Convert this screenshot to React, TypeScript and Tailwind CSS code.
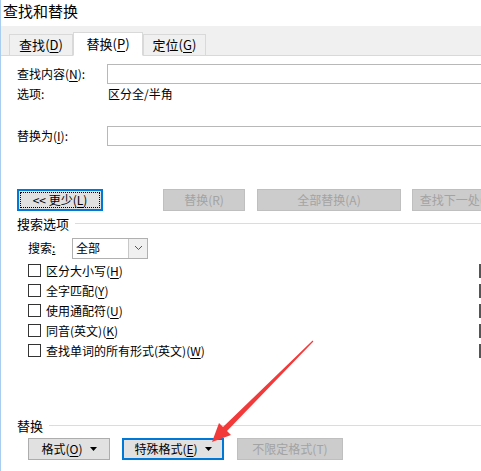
import React from 'react';

const FONT = { fontFamily: '"Noto Sans CJK SC", "Noto Sans", sans-serif' };

// mnemonic letter, underlined like Win32 dialogs
const Key: React.FC<{ k: string }> = ({ k }) => (
  <span>
    (<span className="underline underline-offset-2">{k}</span>)
  </span>
);

const Caret = () => (
  <svg width="7" height="4" viewBox="0 0 7 4" className="shrink-0">
    <path d="M0 0 H7 L3.5 4 Z" fill="#000" />
  </svg>
);

const Tab: React.FC<{ label: string; k: string; active?: boolean; w: string }> = ({ label, k, active, w }) =>
  active ? (
    <div className={`${w} h-[24px] -mb-px bg-white border border-[#d9d9d9] border-b-white flex items-center justify-center text-[13px]`}>
      {label}
      <Key k={k} />
    </div>
  ) : (
    <div className={`${w} h-[21px] bg-[#f0f0f0] border border-[#d9d9d9] border-b-0 flex items-center justify-center text-[13px]`}>
      {label}
      <Key k={k} />
    </div>
  );

const Btn: React.FC<{ children: React.ReactNode; className?: string; disabled?: boolean }> = ({ children, className = '', disabled }) => (
  <div
    className={`shrink-0 h-[22px] flex items-center justify-center text-[12px] whitespace-nowrap ${
      disabled ? 'bg-[#cccccc] border border-[#bfbfbf] text-[#a3a3a3]' : 'bg-[#e1e1e1] border border-[#adadad] text-black'
    } ${className}`}
  >
    {children}
  </div>
);

const Check: React.FC<{ children: React.ReactNode }> = ({ children }) => (
  <div className="flex items-center h-[20px]">
    <div className="w-[451px] shrink-0 flex items-center gap-[5px]">
      <span className="w-[13px] h-[13px] border border-[#333] bg-white shrink-0" />
      <span className="text-[12px]">{children}</span>
    </div>
    <span className="w-[13px] h-[14px] border-l-2 border-[#555] shrink-0" />
  </div>
);

const Section: React.FC<{ title: string }> = ({ title }) => (
  <div className="flex items-center gap-[6px] text-[13px]">
    <span>{title}</span>
    <span className="flex-1 border-t border-[#dcdcdc]" />
  </div>
);

export default function App() {
  return (
    <div className="relative w-[481px] h-[471px] overflow-hidden bg-white border-l border-[#a9cdef] text-black" style={FONT}>
      {/* window caption */}
      <div className="h-[26px] pl-[2px] pt-[1px] text-[15px] leading-[20px]">查找和替换</div>

      {/* tab strip */}
      <div className="h-[30px] bg-[#f0f0f0] border-b border-[#d9d9d9] flex items-end pl-[8px]">
        <Tab label="查找" k="D" w="w-[64px]" />
        <Tab label="替换" k="P" w="w-[70px]" active />
        <Tab label="定位" k="G" w="w-[63px]" />
      </div>

      <div className="pl-[16px]">
        {/* find */}
        <div className="mt-[8px] flex items-center h-[20px]">
          <span className="w-[90px] text-[12px]">
            查找内容<Key k="N" />:
          </span>
          <div className="flex-1 h-[20px] border border-[#b8b8b8] border-r-0" />
        </div>
        <div className="mt-[3px] flex items-center h-[14px] text-[12px]">
          <span className="w-[91px]">选项:</span>
          <span>区分全/半角</span>
        </div>

        {/* replace with */}
        <div className="mt-[25px] flex items-center h-[20px]">
          <span className="w-[90px] text-[12px]">
            替换为<Key k="I" />:
          </span>
          <div className="flex-1 h-[20px] border border-[#b8b8b8] border-r-0" />
        </div>

        {/* action buttons */}
        <div className="mt-[43px] flex items-center">
          <div className="shrink-0 w-[86px] h-[22px] border-2 border-[#0078d7] bg-[#e1e1e1] p-[1px]">
            <div className="h-full border border-dotted border-black flex items-center justify-center text-[12px] leading-none">
              &lt;&lt; 更少<Key k="L" />
            </div>
          </div>
          <Btn disabled className="ml-[60px] w-[82px]">替换(R)</Btn>
          <Btn disabled className="ml-[12px] w-[144px]">全部替换(A)</Btn>
          <Btn disabled className="ml-[11px] w-[90px]">查找下一处(F)</Btn>
        </div>

        {/* search options */}
        <div className="mt-[3px]">
          <Section title="搜索选项" />
        </div>
        <div className="pl-[11px]">
          <div className="mt-[4px] flex items-center gap-[3px] text-[12px]">
            <span className="w-[41px]">
              搜索<span className="underline">:</span>
            </span>
            <div className="w-[76px] h-[21px] border border-[#b0b0b0] flex items-center">
              <span className="flex-1 pl-[3px]">全部</span>
              <span className="w-[19px] h-full border-l border-[#c8c8c8] bg-[#f0f0f0] flex items-center justify-center">
                <svg width="9" height="6" viewBox="0 0 9 6">
                  <path d="M1 1 L4.5 4.5 L8 1" fill="none" stroke="#555" strokeWidth="1" />
                </svg>
              </span>
            </div>
          </div>
          <div className="mt-[2px]">
            <Check>
              区分大小写<Key k="H" />
            </Check>
            <Check>
              全字匹配<Key k="Y" />
            </Check>
            <Check>
              使用通配符<Key k="U" />
            </Check>
            <Check>
              同音(英文)<Key k="K" />
            </Check>
            <Check>
              查找单词的所有形式(英文)<Key k="W" />
            </Check>
          </div>
        </div>

        {/* replace section */}
        <div className="mt-[55px]">
          <Section title="替换" />
        </div>
        <div className="mt-[3px] pl-[11px] flex items-center">
          <Btn className="w-[82px] gap-[7px]">
            <span>
              格式<Key k="O" />
            </span>
            <Caret />
          </Btn>
          <div className="shrink-0 ml-[12px] w-[102px] h-[22px] border-2 border-[#0078d7] bg-[#e1e1e1] flex items-center justify-center gap-[7px] text-[12px]">
            <span>
              特殊格式<Key k="E" />
            </span>
            <Caret />
          </div>
          <Btn disabled className="ml-[13px] w-[106px]">不限定格式(T)</Btn>
        </div>
      </div>

      {/* red pointer arrow */}
      <svg className="absolute inset-0 pointer-events-none" width="481" height="471" viewBox="0 0 481 471">
        <polygon
          points="211,442 218,423 222,427 311.6,340.6 312.4,341.4 226,431 230,435"
          fill="#f23a3a"
        />
      </svg>
    </div>
  );
}
